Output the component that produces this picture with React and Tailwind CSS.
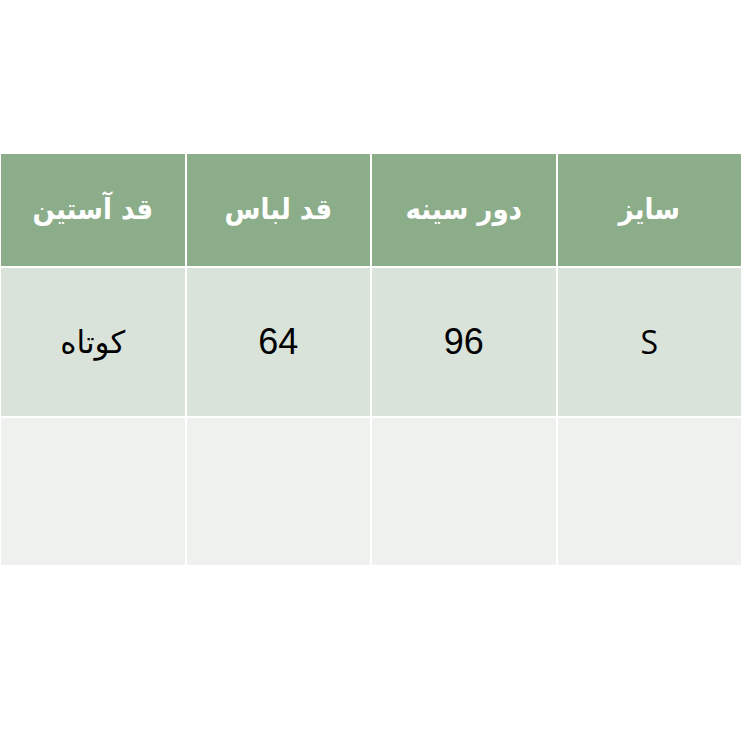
const headers = ['قد آستین', 'قد لباس', 'دور سینه', 'سایز'];
const row = [
  { text: 'کوتاه', cls: 'text-[31px] font-["DejaVu_Sans",sans-serif]' },
  { text: '64', cls: 'text-[36px] font-["Liberation_Sans",sans-serif]' },
  { text: '96', cls: 'text-[36px] font-["Liberation_Sans",sans-serif]' },
  { text: 'S', cls: 'text-[32px] font-["Open_Sans",sans-serif]' },
];

export default function App() {
  return (
    <div className="w-[750px] h-[750px] bg-white pt-[154px] pl-[1px]">
      <div className="w-[740px] grid grid-cols-4 gap-x-[2px] gap-y-[2px]">
        {headers.map((h) => (
          <div
            key={h}
            className="h-[112px] bg-[#8cad89] flex items-center justify-center text-white text-[29px] font-bold font-['DejaVu_Sans_Condensed','DejaVu_Sans',sans-serif]"
            dir="rtl"
          >
            {h}
          </div>
        ))}
        {row.map((c) => (
          <div
            key={c.text}
            className={`h-[148px] bg-[#dae3da] flex items-center justify-center text-black ${c.cls}`}
            dir="rtl"
          >
            {c.text}
          </div>
        ))}
        {[0, 1, 2, 3].map((i) => (
          <div key={i} className="h-[147px] bg-[#eff1ee]" />
        ))}
      </div>
    </div>
  );
}
